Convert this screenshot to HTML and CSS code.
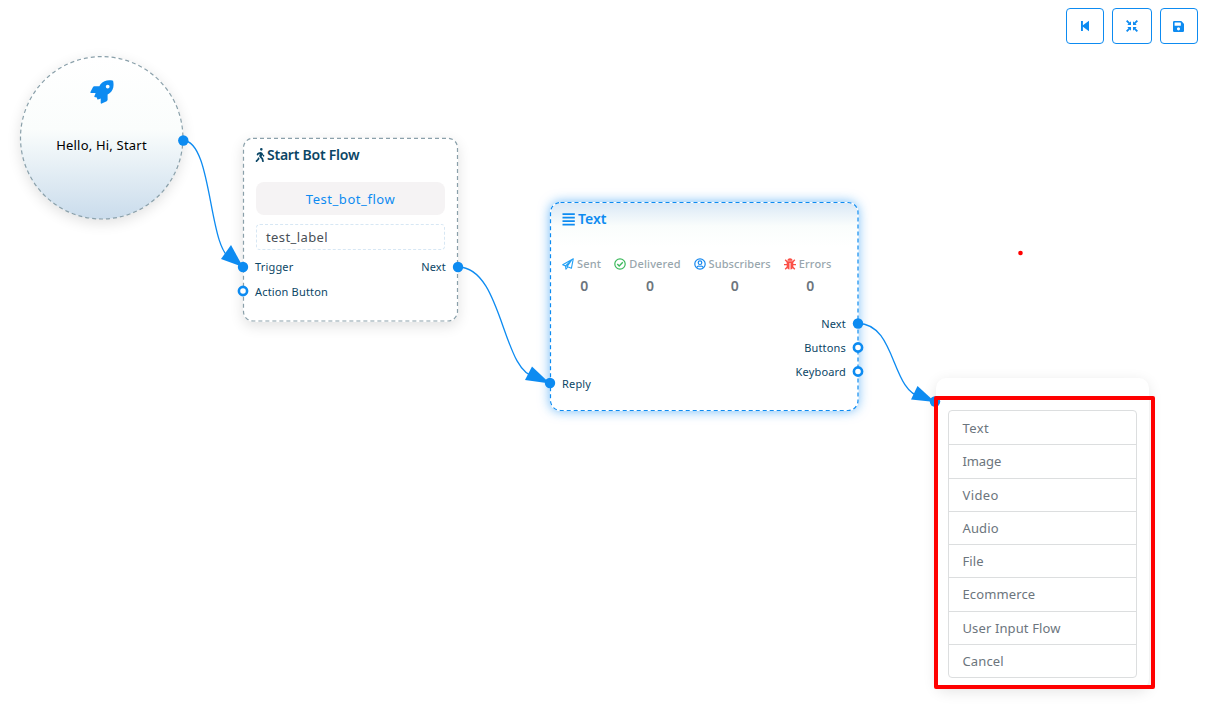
FILE: index.html
```html
<!DOCTYPE html>
<html lang="en">
<head>
<meta charset="utf-8">
<title>Bot flow builder</title>
<link rel="stylesheet" href="styles.css">
</head>
<body>
<main class="canvas">
  <nav class="toolbar">
    <button class="tool" aria-label="Back"><svg width="10" height="12" viewBox="0 0 10 12"><path d="M1 1H2.900V5.200L9 .8V11.200L2.900 6.800V11H1Z"/></svg></button>
    <button class="tool tool-wide" aria-label="Fit"><svg width="12" height="12" viewBox="0 0 12 12"><path d="M5 5H1.300L2.500 3.800 0 1.300 1.300 0 3.800 2.500 5 1.300ZM7 5V1.300L8.200 2.500 10.700 0 12 1.300 9.500 3.800 10.700 5ZM5 7V10.700L3.800 9.500 1.300 12 0 10.700 2.500 8.200 1.300 7ZM7 7H10.700L9.500 8.200 12 10.700 10.700 12 8.200 9.500 7 10.700Z"/></svg></button>
    <button class="tool tool-save" aria-label="Save"><svg width="11" height="11" viewBox="0 0 448 448"><path d="M434 98 350 14A48 48 0 0 0 316 0H48A48 48 0 0 0 0 48V400A48 48 0 0 0 48 448H400A48 48 0 0 0 448 400V132A48 48 0 0 0 434 98ZM224 384A64 64 0 1 1 224 256 64 64 0 0 1 224 384ZM320 180A12 12 0 0 1 308 192H76A12 12 0 0 1 64 180V76A12 12 0 0 1 76 64H305L320 79Z"/></svg></button>
  </nav>

  <section class="node start">
    <svg class="rocket" width="24" height="24" viewBox="0 0 24 24"><path fill-rule="evenodd" d="M23.100.7C18.500-.3 13.800.1 10.300 4.600L9.400 6.200H4.300Q3.400 6.300 2.900 7.200L.3 12.200Q.2 13 1 13.100H5.600L5 14.700Q4.200 16 4.400 17L6.800 17.600 7.400 19.500Q8.400 19.700 10.700 18.400V23Q10.900 23.800 11.700 23.600L16.700 21.200Q17.500 20.700 17.600 19.800V14.500L19.200 13.600C23.700 10.200 24.100 5.500 23.100.7ZM17.700 4.700A1.900 1.900 0 1 1 17.700 8.500 1.900 1.900 0 0 1 17.700 4.700Z"/></svg>
    <p class="keywords">Hello, Hi, Start</p>
  </section>

  <section class="node flow">
    <h2 class="title"><svg width="10" height="14" viewBox="0 0 320 512"><path d="M208 96A48 48 0 1 0 208 0 48 48 0 0 0 208 96ZM302 257 279 245 269 216C256 172 217 144 173 144 147 144 132 151 104 162 80 172 60 190 49 213L42 227C35 243 41 262 57 270 72 278 91 271 99 256L106 242Q112 230 123 226L150 215 135 276C130 298 135 321 150 337L210 402Q216 409 219 420L237 493C241 510 259 520 276 516 293 511 303 494 299 477L277 388Q274 377 267 369L221 319 238 250 244 267Q249 282 264 290L273 313C288 321 307 315 315 300 322 284 317 265 302 257ZM74 386Q71 394 65 399L9 455C-3 467-3 488 9 500 22 513 42 513 54 500L120 434Q126 428 130 420L145 382C98 332 103 338 94 326Z"/></svg><span class="t-flow">Start Bot Flow</span></h2>
    <div class="flow-name"><span>Test_bot_flow</span></div>
    <div class="flow-label"><span>test_label</span></div>
    <div class="ports"><span class="port">Trigger</span><span class="port">Next</span></div>
    <div class="ports"><span class="port">Action Button</span></div>
  </section>

  <section class="node message">
    <h2 class="title title-text"><svg width="13" height="13" viewBox="0 0 13 13"><path d="M.5 .2H12.800V2.100H.5ZM.5 3.700H12.800V5.600H.5ZM.5 7.200H12.800V9.100H.5ZM.5 10.700H12.800V12.600H.5Z"/></svg><span>Text</span></h2>
    <div class="stats">
      <div class="stat"><div class="stat-name"><svg width="12" height="12" viewBox="0 0 12 12" fill="none" stroke="#24a0f4" stroke-width="1.100" stroke-linejoin="round"><path d="M11.300.7.7 6.700 3.500 8 9.400 2.500 5 8.600 9.400 10.300ZM3.500 8 3.900 11.200 5.800 9"/></svg><span class="s-sent">Sent</span></div><b>0</b></div>
      <div class="stat"><div class="stat-name"><svg width="12" height="12" viewBox="0 0 12 12" fill="none" stroke="#3cb95c" stroke-width="1.200"><circle cx="6" cy="6" r="5.200"/><path d="M3.300 6.100 5.200 8 8.800 4.300" stroke-width="1.400"/></svg><span>Delivered</span></div><b>0</b></div>
      <div class="stat"><div class="stat-name"><svg width="12" height="12" viewBox="0 0 12 12" fill="none" stroke="#1688ef" stroke-width="1.200"><circle cx="6" cy="6" r="5.200"/><circle cx="6" cy="4.700" r="1.800"/><path d="M2.700 9.700Q3.300 7.900 4.900 8 6 8.500 7.100 8 8.700 7.900 9.300 9.700"/></svg><span class="s-subscribers">Subscribers</span></div><b>0</b></div>
      <div class="stat"><div class="stat-name"><svg width="12" height="12" viewBox="0 0 12 12"><path fill="#fb4f46" d="M3.400 2.700A2.600 2.500 0 0 1 8.600 2.700ZM2.700 3.200H9.300V8.500Q8.900 11.300 6.500 11.500V5H5.500V11.500Q3.100 11.300 2.700 8.500Z"/><path fill="none" stroke="#fb4f46" stroke-width="1.400" d="M1.200 1.800 3.300 3.900M10.800 1.800 8.700 3.900M0 6.600H3M9 6.600H12M1.200 11.300 3.400 9M10.800 11.300 8.600 9"/></svg><span>Errors</span></div><b>0</b></div>
    </div>
    <div class="outputs"><span class="port">Next</span><span class="port">Buttons</span><span class="port">Keyboard</span></div>
    <div class="port-reply"><span class="port">Reply</span></div>
  </section>

  <section class="node picker">
    <ul class="options">
      <li><span class="wide">Text</span></li><li><span class="tight">Image</span></li><li><span class="wide">Video</span></li><li><span>Audio</span></li><li><span>File</span></li><li><span>Ecommerce</span></li><li><span>User Input Flow</span></li><li><span>Cancel</span></li>
    </ul>
  </section>

  <svg class="wires" width="1214" height="710" viewBox="0 0 1214 710">
    <g class="outline">
      <circle cx="101.700" cy="137.800" r="81.200"/>
      <rect x="243.500" y="138.300" width="214" height="182.700" rx="9.500"/>
      <rect class="active-gap" x="550.500" y="202.500" width="307.500" height="208" rx="10"/>
      <rect class="active" x="550.500" y="202.500" width="307.500" height="208" rx="10"/>
    </g>
    <g class="wire">
      <path d="M183 140.500C213 140.500 208 252 232 259"/>
      <path d="M458 267C503 267 502 374 536 377"/>
      <path d="M858 323.500C896 323.500 891 391 921 397"/>
    </g>
    <g class="dot">
      <path d="M231 245 221 259 243 267Z"/><path d="M532 366.500 525 380 550 383.500Z"/><path d="M917.500 386 911 399.500 935 402Z"/>
      <circle cx="183.300" cy="140.500" r="5.200"/><circle cx="243" cy="267" r="5.200"/><circle cx="458" cy="267" r="5.200"/><circle cx="550" cy="383" r="5.200"/><circle cx="858" cy="323.500" r="5.200"/><circle cx="935" cy="401.500" r="5.200"/>
    </g>
    <g class="ring"><circle cx="243" cy="291" r="4.100"/><circle cx="858" cy="347.500" r="4.100"/><circle cx="858" cy="371.500" r="4.100"/></g>
    <circle cx="1020.500" cy="253" r="2.300" fill="#f00"/>
  </svg>
  <div class="highlight"></div>
</main>
</body>
</html>
```
FILE: styles.css
```css
* { box-sizing: border-box; }
body { margin: 0; background: #fff; font-family: "Noto Sans", sans-serif; }
h2, p, ul { margin: 0; padding: 0; }
.canvas { position: relative; width: 1214px; height: 710px; overflow: hidden; }
.toolbar { display: flex; justify-content: flex-end; gap: 8px; padding: 8px 16px 0 0; }
.tool { width: 38px; height: 36px; padding: 0; border: 1px solid #0d8bf1; border-radius: 4px; background: #fff; display: flex; align-items: center; justify-content: center; }
.tool-wide { width: 40px; }
.tool-save { padding-right: 1px; }
.tool svg, .rocket { fill: #0d8bf1; }
.node { position: absolute; background: #fff; }
.node span, .keywords { white-space: nowrap; }
.start { left: 20px; top: 56px; width: 163px; height: 163px; border-radius: 50%; background: linear-gradient(#fff, #fafdfc 45%, #cadcec); box-shadow: 0 4px 14px rgba(0,0,0,.12); display: flex; flex-direction: column; align-items: center; padding-top: 24px; }
.keywords { margin-top: 32px; font-size: 13px; line-height: 18px; letter-spacing: .2px; color: #000; }
.flow { left: 243px; top: 138px; width: 215px; height: 184px; border-radius: 10px; padding: 8px 12px; box-shadow: 0 4px 14px rgba(0,0,0,.12); }
.title { display: flex; align-items: center; gap: 2px; height: 18px; font-size: 14px; line-height: 18px; font-weight: 600; color: #0b4666; }
.title svg { fill: currentColor; }
.t-flow { letter-spacing: -.24px; }
.flow-name { margin: 18px 1px 0; height: 33px; border-radius: 8px; background: #f5f3f4; color: #0d8bf1; font-size: 13px; line-height: 34px; letter-spacing: .55px; text-align: center; }
.flow-label { margin: 9px 1px 5px; height: 26px; border: 1px dashed #d7e7f4; border-radius: 4px; padding-left: 9px; font-size: 13px; line-height: 25px; letter-spacing: .4px; color: #495057; }
.ports { display: flex; justify-content: space-between; height: 25px; }
.port { font-size: 11px; line-height: 24px; letter-spacing: .17px; color: #0b4666; }
.message { left: 550px; top: 202px; width: 308px; height: 209px; border-radius: 10px; padding: 8px 12px; background: linear-gradient(#d9e8f6, #fafdfc 24px, #fff 45px); box-shadow: 0 0 12px rgba(13,139,241,.6); }
.title-text { color: #0d8bf1; gap: 3px; }
.stats { display: flex; gap: 13px; margin-top: 27px; }
.stat { text-align: center; color: #6c757d; line-height: 20px; }
.stat b { display: block; margin-top: 3px; padding-left: 5px; font-weight: 600; font-size: 14px; }
.stat-name { display: flex; align-items: center; gap: 3px; height: 18px; color: #98a6ad; font-size: 11px; font-weight: 500; letter-spacing: .15px; }
.s-sent { letter-spacing: .2px; }
.s-subscribers { letter-spacing: .08px; }
.outputs { display: flex; flex-direction: column; align-items: flex-end; margin-top: 16px; }
.port-reply { display: flex; height: 24px; margin-top: -12px; }
.picker { left: 936px; top: 378px; width: 213px; height: 311px; border-radius: 10px; padding: 32px 12px; box-shadow: 0 3px 14px rgba(0,0,0,.1); }
.options { list-style: none; width: 189px; height: 268px; border: 1px solid #dcdedf; border-radius: 4px; display: grid; grid-template-rows: repeat(8, 1fr); }
.options li { display: flex; align-items: center; padding: 0 0 0 13.500px; border-top: 1px solid #dcdedf; font-size: 13px; line-height: 18px; letter-spacing: .12px; color: #6c757d; }
.options li:first-child { border-top: 0; }
.options .wide { letter-spacing: .4px; }
.options .tight { letter-spacing: -.1px; }
.wires { position: absolute; left: 0; top: 0; }
.outline { fill: none; stroke: #8aa0aa; stroke-width: 1.200; stroke-dasharray: 4 3; }
.outline .active { stroke: #0d8bf1; }
.outline .active-gap { stroke: #fff; stroke-dasharray: none; }
.wire { fill: none; stroke: #0d8bf1; stroke-width: 1.300; }
.dot { fill: #0d8bf1; }
.ring { fill: #fff; stroke: #0d8bf1; stroke-width: 2.600; }
.highlight { position: absolute; left: 934px; top: 396px; width: 221px; height: 293px; border: 4px solid #f00; border-radius: 2px; }
```
